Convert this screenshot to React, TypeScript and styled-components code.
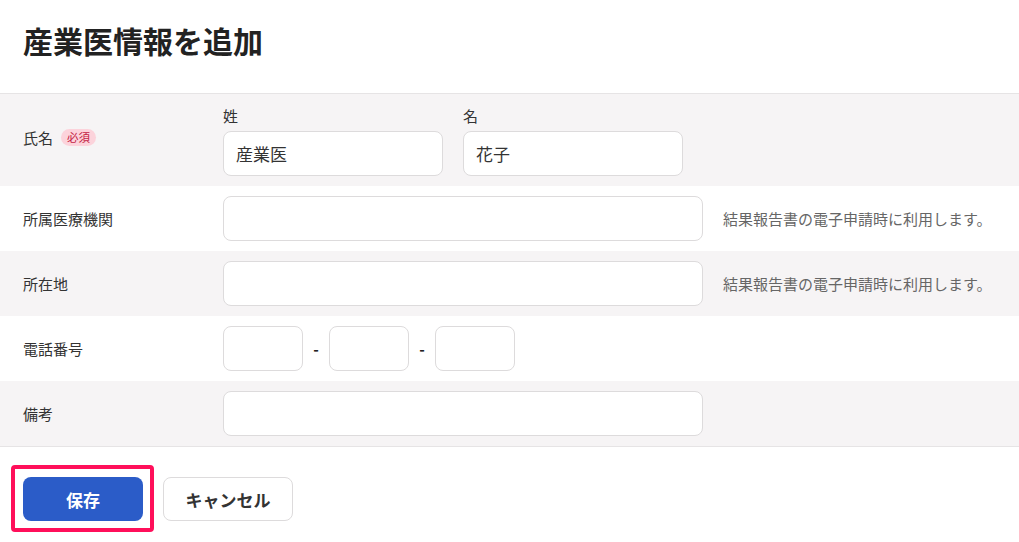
import styled, { createGlobalStyle } from 'styled-components';

const GlobalStyle = createGlobalStyle`
  body {
    margin: 0;
    background: #ffffff;
    font-family: "Noto Sans CJK JP", "Noto Sans", sans-serif;
    color: #333333;
  }
  * {
    box-sizing: border-box;
  }
`;

interface Row {
  label: string;
  note?: string;
}

const TEXT_ROWS: Row[] = [
  { label: '所属医療機関', note: '結果報告書の電子申請時に利用します。' },
  { label: '所在地', note: '結果報告書の電子申請時に利用します。' },
];

export default function App() {
  return (
    <>
      <GlobalStyle />
      <Page>
        <Header>
          <Title>産業医情報を追加</Title>
        </Header>

        <Form>
          <FieldRow $shaded>
            <FieldLabel $raise>
              氏名
              <Required>必須</Required>
            </FieldLabel>
            <Controls>
              <NamePart>
                <SubLabel>姓</SubLabel>
                <TextInput $width={220} defaultValue="産業医" />
              </NamePart>
              <NamePart>
                <SubLabel>名</SubLabel>
                <TextInput $width={220} defaultValue="花子" />
              </NamePart>
            </Controls>
          </FieldRow>

          {TEXT_ROWS.map((row, i) => (
            <FieldRow key={row.label} $shaded={i % 2 === 1}>
              <FieldLabel>{row.label}</FieldLabel>
              <Controls>
                <TextInput $width={480} />
                {row.note && <Note>{row.note}</Note>}
              </Controls>
            </FieldRow>
          ))}

          <FieldRow>
            <FieldLabel>電話番号</FieldLabel>
            <Controls $gap={0}>
              <TextInput $width={80} />
              <Dash>-</Dash>
              <TextInput $width={80} />
              <Dash>-</Dash>
              <TextInput $width={80} />
            </Controls>
          </FieldRow>

          <FieldRow $shaded>
            <FieldLabel>備考</FieldLabel>
            <Controls>
              <TextInput $width={480} />
            </Controls>
          </FieldRow>
        </Form>

        <Footer>
          <Highlight>
            <PrimaryButton type="button">保存</PrimaryButton>
          </Highlight>
          <SecondaryButton type="button">キャンセル</SecondaryButton>
        </Footer>
      </Page>
    </>
  );
}

// Styles
const Page = styled.div`
  width: 1019px;
  min-height: 542px;
  background: #ffffff;
`;

const Header = styled.header`
  height: 94px;
  padding: 18px 23px 0;
  border-bottom: 1px solid #e6e4e5;
`;

const Title = styled.h1`
  margin: 0;
  font-size: 30px;
  line-height: 44px;
  font-weight: 700;
  color: #222222;
`;

const Form = styled.div`
  border-bottom: 1px solid #e6e4e5;
`;

const FieldRow = styled.div<{ $shaded?: boolean }>`
  display: grid;
  grid-template-columns: 200px 1fr;
  align-items: center;
  padding: 10px 23px 10px;
  background: ${(p) => (p.$shaded ? '#f6f4f5' : '#ffffff')};

  &:first-child {
    padding-top: 12px;
    padding-bottom: 10px;
  }
`;

const FieldLabel = styled.div<{ $raise?: boolean }>`
  display: flex;
  align-items: center;
  gap: 8px;
  margin-bottom: ${(p) => (p.$raise ? 8 : 0)}px;
  font-size: 15px;
  color: #333333;
`;

const Required = styled.span`
  display: inline-block;
  height: 17px;
  padding: 0 6px;
  border-radius: 9px;
  background: #fcd3db;
  color: #c41d45;
  font-size: 11.5px;
  line-height: 17px;
`;

const Controls = styled.div<{ $gap?: number }>`
  display: flex;
  align-items: center;
  gap: ${(p) => (p.$gap ?? 20)}px;
`;

const NamePart = styled.div`
  display: flex;
  flex-direction: column;
`;

const SubLabel = styled.span`
  font-size: 15px;
  line-height: 20px;
  margin-bottom: 5px;
  color: #333333;
`;

const TextInput = styled.input<{ $width: number }>`
  width: ${(p) => p.$width}px;
  height: 45px;
  padding: 0 12px;
  border: 1px solid #dddbdc;
  border-radius: 8px;
  background: #ffffff;
  font-family: inherit;
  font-size: 17px;
  color: #333333;

  &:focus {
    outline: none;
    border-color: #2b5cc8;
  }
`;

const Note = styled.span`
  font-size: 15px;
  color: #666666;
`;

const Dash = styled.span`
  width: 26px;
  text-align: center;
  font-size: 15px;
  font-weight: 700;
  color: #222222;
`;

const Footer = styled.footer`
  display: flex;
  align-items: center;
  gap: 20px;
  padding: 30px 23px 20px;
`;

const Highlight = styled.span`
  position: relative;
  display: inline-flex;

  &::after {
    content: '';
    position: absolute;
    inset: -12px -11px -11px -12px;
    border: 4px solid #ff0f5a;
    border-radius: 4px;
    pointer-events: none;
  }
`;

const ButtonBase = styled.button`
  height: 44px;
  border-radius: 8px;
  font-family: inherit;
  font-size: 17px;
  font-weight: 700;
  cursor: pointer;
`;

const PrimaryButton = styled(ButtonBase)`
  width: 120px;
  border: none;
  background: #2b5cc8;
  color: #ffffff;
`;

const SecondaryButton = styled(ButtonBase)`
  width: 130px;
  border: 1px solid #dddbdc;
  background: #ffffff;
  color: #333333;
`;
